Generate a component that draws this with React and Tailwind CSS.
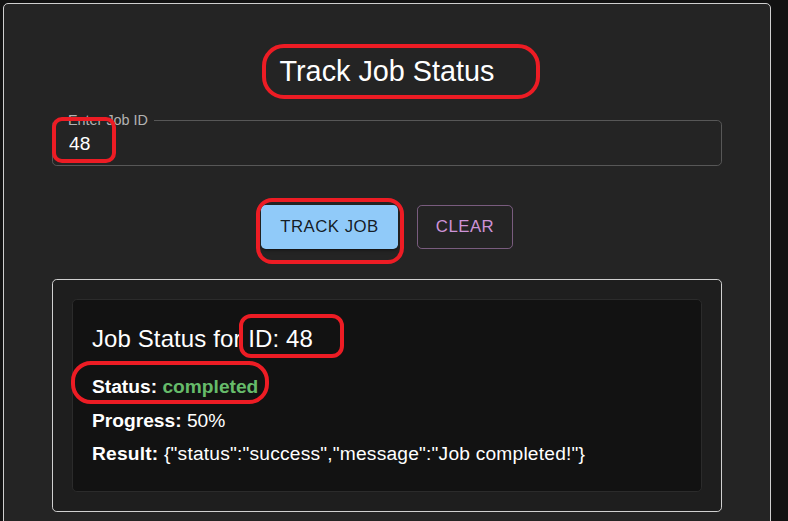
import React from 'react';

const Mark = ({ className }) => (
  <div className={`pointer-events-none absolute border-4 border-[#ed1c24] ${className}`} />
);

const App = () => {
  const [jobId, setJobId] = React.useState('48');

  const job = {
    status: 'completed',
    progress: 50,
    result: { status: 'success', message: 'Job completed!' },
  };

  return (
    <div className="relative h-[521px] overflow-hidden bg-[#121212] font-['Liberation_Sans',Arial,sans-serif]">
      <div className="ml-[3px] mt-[3px] w-[768px] rounded-[5px] border border-[#cfcfcf] bg-[#242424] px-[48px] pt-[48px] pb-[48px]">
        <h1 className="text-center text-[28.8px] leading-[38.4px] text-white">Track Job Status</h1>

        <fieldset className="mt-[21.6px] w-full rounded-[4.8px] border border-[#575757] px-[9px] pb-[10px]">
          <legend className="px-[6px] text-[14.4px] leading-[16px] text-[#b3b3b3]">Enter Job ID</legend>
          <input
            value={jobId}
            onChange={(e) => setJobId(e.target.value)}
            className="mt-[4px] block h-[23px] w-full bg-transparent pl-[7px] text-[19.2px] leading-[23px] text-white outline-none"
          />
        </fieldset>

        <div className="mt-[39px] flex justify-center gap-[19px]">
          <button className="h-[44px] w-[137px] rounded-[4.8px] bg-[#90caf9] text-[16.8px] tracking-[0.48px] text-[rgba(0,0,0,0.87)] uppercase shadow-[0_3px_1px_-2px_rgba(0,0,0,0.2),0_2px_2px_0_rgba(0,0,0,0.14),0_1px_5px_0_rgba(0,0,0,0.12)]">
            Track Job
          </button>
          <button
            onClick={() => setJobId('')}
            className="h-[44px] w-[96px] rounded-[4.8px] border border-[rgba(206,147,216,0.5)] text-[16.8px] tracking-[0.48px] text-[#ce93d8] uppercase"
          >
            Clear
          </button>
        </div>

        <div className="mt-[30px] rounded-[4.8px] border border-[#d0d0d0] bg-[#1e1e1e] p-[19px]">
          <div className="rounded-[4.8px] border border-[#2b2b2b] bg-[#121212] px-[19px] pt-[23px] pb-[20px] text-white">
            <h2 className="mb-[15px] text-[24px] leading-[32px] tracking-[0.1px]">Job Status for ID: 48</h2>
            <p className="text-[19.2px] leading-[33.6px]">
              <strong>Status:</strong> <strong className="text-[#66bb6a]">{job.status}</strong>
            </p>
            <p className="text-[19.2px] leading-[33.6px]">
              <strong>Progress:</strong> {job.progress}%
            </p>
            <p className="text-[19.2px] leading-[33.6px] tracking-[0.2px]">
              <strong>Result:</strong> {JSON.stringify(job.result)}
            </p>
          </div>
        </div>
      </div>

      {/* red annotation marks from the screenshot */}
      <Mark className="left-[262px] top-[44px] h-[55px] w-[278px] rounded-[22px]" />
      <Mark className="left-[52px] top-[117px] h-[46px] w-[64px] rounded-[10px]" />
      <Mark className="left-[256px] top-[198px] h-[66px] w-[148px] rounded-[16px]" />
      <Mark className="left-[239px] top-[314px] h-[44px] w-[105px] rounded-[12px]" />
      <Mark className="left-[71px] top-[361px] h-[43px] w-[198px] rounded-[20px]" />
    </div>
  );
};

export default App;
